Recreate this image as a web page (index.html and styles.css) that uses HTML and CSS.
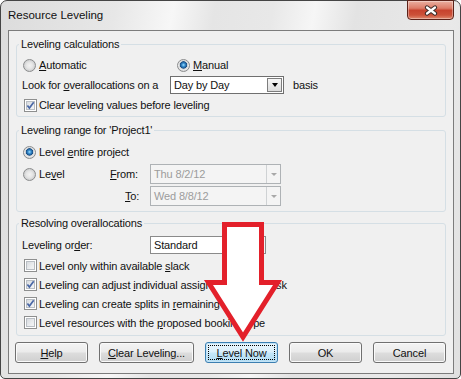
FILE: index.html
```html
<!DOCTYPE html>
<html lang="en">
<head>
<meta charset="UTF-8">
<title>Resource Leveling</title>
<link rel="stylesheet" href="styles.css">
</head>
<body>
<div class="window">
  <div class="titlebar">
    <span class="title">Resource Leveling</span>
    <div class="close">
      <svg width="14" height="11" viewBox="0 0 14 11">
        <path d="M3 2.5 L11 8.5 M11 2.5 L3 8.5" stroke="#3b2b28" stroke-width="4.2" stroke-linecap="round"/>
        <path d="M3 2.5 L11 8.5 M11 2.5 L3 8.5" stroke="#fff" stroke-width="2.2" stroke-linecap="round"/>
      </svg>
    </div>
  </div>
  <div class="client">
    <fieldset class="group calc">
      <legend>Leveling calculations</legend>
      <div class="body">
        <div class="row">
          <label class="opt auto"><span class="radio"></span><span><u>A</u>utomatic</span></label>
          <label class="opt"><span class="radio on"></span><span><u>M</u>anual</span></label>
        </div>
        <div class="row">
          <span class="look">Look for <u>o</u>verallocations on a</span>
          <div class="combo period"><span class="val">Day by Day</span><span class="drop"></span></div>
          <span class="basis">basis</span>
        </div>
        <div class="row">
          <label class="opt"><span class="check on"><svg width="11" height="11" viewBox="0 0 11 11"><path d="M2.4 5.5 L4.4 8 L8.7 2.3" fill="none" stroke="#4a68a6" stroke-width="1.7"/></svg></span><span>Clear levelin<u>g</u> values before leveling</span></label>
        </div>
      </div>
    </fieldset>

    <fieldset class="group range">
      <legend>Leveling range for 'Project1'</legend>
      <div class="body">
        <div class="row tall">
          <label class="opt"><span class="radio on"></span><span>Level <u>e</u>ntire project</span></label>
        </div>
        <div class="row tall">
          <label class="opt level"><span class="radio"></span><span>Le<u>v</u>el</span></label>
          <span class="from"><u>F</u>rom:</span>
          <div class="combo date off"><span class="val">Thu 8/2/12</span><span class="drop"></span></div>
        </div>
        <div class="row tall">
          <span class="to"><u>T</u>o:</span>
          <div class="combo date off"><span class="val">Wed 8/8/12</span><span class="drop"></span></div>
        </div>
      </div>
    </fieldset>

    <fieldset class="group resolve">
      <legend>Resolving overallocations</legend>
      <div class="body">
        <div class="row">
          <span class="order">Leveling or<u>d</u>er:</span>
          <div class="combo standard"><span class="val">Standard</span><span class="drop"></span></div>
        </div>
        <div class="row short first">
          <label class="opt"><span class="check"></span><span>Level only within available <u>s</u>lack</span></label>
        </div>
        <div class="row short">
          <label class="opt"><span class="check on"><svg width="11" height="11" viewBox="0 0 11 11"><path d="M2.4 5.5 L4.4 8 L8.7 2.3" fill="none" stroke="#4a68a6" stroke-width="1.7"/></svg></span><span>Leveling can adjust <u>i</u>ndividual assignments on a task</span></label>
        </div>
        <div class="row short">
          <label class="opt"><span class="check on"><svg width="11" height="11" viewBox="0 0 11 11"><path d="M2.4 5.5 L4.4 8 L8.7 2.3" fill="none" stroke="#4a68a6" stroke-width="1.7"/></svg></span><span>Leveling can create splits in <u>r</u>emaining work</span></label>
        </div>
        <div class="row short">
          <label class="opt"><span class="check"></span><span>Level resources with the <u>p</u>roposed booking type</span></label>
        </div>
      </div>
    </fieldset>

    <div class="buttons">
      <div class="btn"><span><u>H</u>elp</span></div>
      <div class="btn wide"><span><u>C</u>lear Leveling...</span></div>
      <div class="btn default"><span><u>L</u>evel Now</span></div>
      <div class="btn"><span>OK</span></div>
      <div class="btn"><span>Cancel</span></div>
    </div>
  </div>
</div>

<svg class="arrow" width="461" height="379" viewBox="0 0 461 379">
  <polygon points="224.5,224.5 261.5,224.5 261.5,282.5 277.5,282.5 243,337 208.5,282.5 224.5,282.5" fill="#fff" stroke="#e3202a" stroke-width="5" stroke-linejoin="miter"/>
</svg>
</body>
</html>
```

FILE: styles.css
```css
body {
  margin: 0;
  font-family: "Liberation Sans", Arial, sans-serif;
  font-size: 11px;
  letter-spacing: -0.15px;
  color: #111;
  background: #fff;
}
.window {
  width: 461px;
  height: 379px;
  box-sizing: border-box;
  border: 1px solid #454545;
  border-radius: 7px 7px 5px 5px;
  background: linear-gradient(100deg, #dcdcdc 0%, #e7e7e7 22%, #f7f7f7 33%, #e5e5e5 41%, #e8e8e8 52%, #f6f6f6 60%, #e3e3e3 68%, #e9e9e9 86%, #e0e0e0 100%);
  display: flex;
  flex-direction: column;
}
.titlebar {
  height: 29px;
  display: flex;
  justify-content: space-between;
  align-items: flex-start;
  padding: 0 6px 0 7px;
}
.title {
  line-height: 29px;
  font-size: 11.5px;
  letter-spacing: 0;
}
.close {
  width: 47px;
  height: 20px;
  margin-top: -1px;
  box-sizing: border-box;
  border: 1px solid #5b2219;
  border-radius: 0 0 4px 4px;
  background: linear-gradient(#eab0a1 0%, #dd7c68 40%, #c7432e 52%, #cc5139 78%, #e08b70 100%);
  box-shadow: inset 0 0 0 1px rgba(255,255,255,0.35);
  display: flex;
  align-items: center;
  justify-content: center;
}
.client {
  margin: 0 6px 0 7px;
  height: 344px;
  box-sizing: border-box;
  border: 1px solid #7c7c7c;
  background: #f0f0f0;
  padding: 7px 7px 0;
}
.group {
  margin: 0;
  padding: 0;
  min-width: 0;
  border: 1px solid #d5dfe5;
  border-radius: 3px;
}
.group legend {
  padding: 0 2px;
  margin-left: 2px;
  line-height: 13px;
}
.range { margin-top: 7px; }
.resolve { margin-top: 5px; }
.body { padding-left: 5px; }
.calc .body { padding-top: 4px; padding-bottom: 1px; }
.range .body { padding-top: 4px; padding-bottom: 4px; }
.resolve .body { padding-top: 5px; padding-bottom: 3px; }
.row {
  display: flex;
  align-items: center;
  height: 20px;
}
.row.tall { height: 22px; }
.row.short { height: 19px; }
.row.first { margin-top: 1px; }
.opt {
  display: flex;
  align-items: center;
}
.opt.auto { width: 154px; }
.opt.level { width: 88px; }
.radio {
  width: 13px;
  height: 13px;
  box-sizing: border-box;
  border-radius: 50%;
  border: 1px solid #8b8c8d;
  margin: 0 3px 0 1px;
  background: radial-gradient(circle at 50% 50%, #f2f2f2 0, #e6e6e6 3px, #cfd0d1 5.5px);
}
.radio.on {
  background: radial-gradient(circle at 50% 45%, #9fe0ff 0, #3a8fd0 1.6px, #174e86 3.4px, #c8ccd0 3.9px, #ececec 5px, #d4d5d6 6px);
}
.check {
  width: 13px;
  height: 13px;
  box-sizing: border-box;
  border: 1px solid #8e8f8f;
  margin: 0 2px 0 2px;
  background: linear-gradient(135deg, #cfd3d8 0%, #eceef0 60%, #f8f8f8 100%);
  box-shadow: inset 0 0 0 1px #fff, inset 0 0 0 2px #b9bec4;
}
.check svg { display: block; }
.look { width: 148px; }
.basis { margin-left: 9px; }
.from { width: 40px; }
.to { margin-left: 103px; width: 25px; }
.order { width: 128px; }
.combo {
  display: flex;
  box-sizing: border-box;
  height: 18px;
  border: 1px solid #6f6f6f;
  background: #fff;
}
.combo .val {
  flex: 1;
  padding-left: 3px;
  line-height: 16px;
}
.combo .drop {
  width: 15px;
  box-sizing: border-box;
  margin: 1px;
  border: 1px solid #7d7d7d;
  background: linear-gradient(#f6f6f6, #dcdcdc);
  display: flex;
  align-items: center;
  justify-content: center;
}
.combo .drop::after {
  content: "";
  border-left: 3.5px solid transparent;
  border-right: 3.5px solid transparent;
  border-top: 4px solid #000;
}
.period { width: 114px; }
.standard { width: 116px; border-color: #8a8a8a; }
.standard .drop {
  margin: 0;
  border: none;
  border-left: 1px solid #c4c4c4;
  background: #f4f4f4;
}
.date {
  width: 131px;
  height: 20px;
}
.combo.off {
  border-color: #aeb2b5;
  background: #f4f4f4;
  color: #9c9c9c;
}
.combo.off .val { line-height: 18px; }
.combo.off .drop {
  margin: 0;
  width: 14px;
  border: none;
  border-left: 1px solid #cfd2d4;
  background: #f4f4f4;
}
.combo.off .drop::after {
  border-left-width: 3px;
  border-right-width: 3px;
  border-top: 3px solid #a8a8a8;
}
.buttons {
  display: flex;
  gap: 11px;
  margin: 6px 0 0 -1px;
}
.btn {
  position: relative;
  width: 73px;
  height: 21px;
  box-sizing: border-box;
  border: 1px solid #707070;
  border-radius: 3px;
  background: linear-gradient(#f3f3f3 0%, #ebebeb 48%, #dddddd 52%, #cfcfcf 100%);
  box-shadow: inset 0 0 0 1px #fafafa;
  display: flex;
  align-items: center;
  justify-content: center;
}
.btn.wide { width: 95px; }
.btn.default {
  border-color: #3c7fb1;
  background: linear-gradient(#e8f5fc 0%, #dcf0fb 48%, #c5e7f9 52%, #b2dcf3 100%);
  box-shadow: inset 0 0 0 1px #c3e3f6;
}
.btn.default::after {
  content: "";
  position: absolute;
  top: 2px;
  left: 2px;
  right: 2px;
  bottom: 2px;
  border: 1px dotted #000;
}
.arrow {
  position: absolute;
  top: 0;
  left: 0;
}
```
